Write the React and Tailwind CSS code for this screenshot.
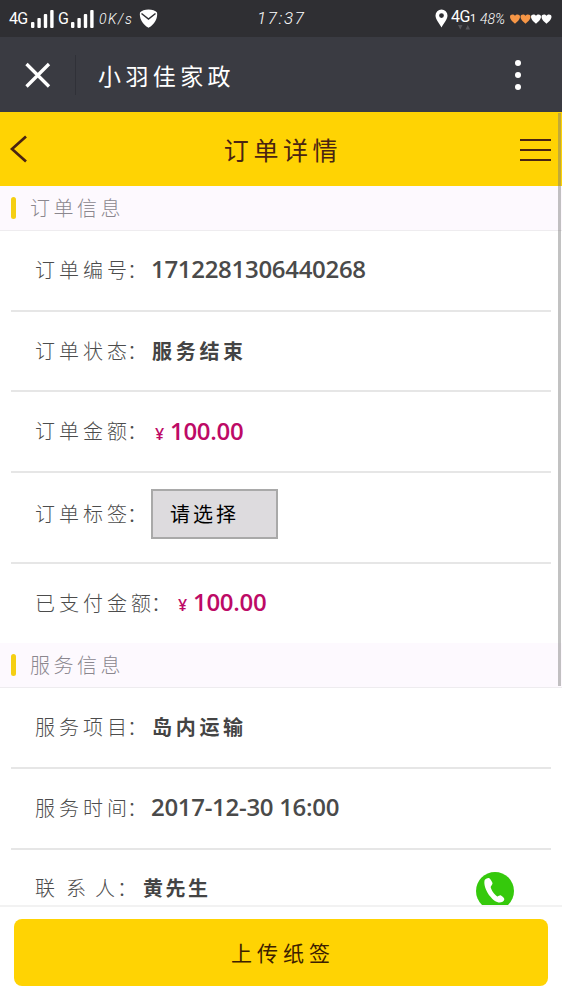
import clsx from "clsx";

const orderRows = [
  { label: "订单编号：", value: "1712281306440268", height: "h-[81px]" },
  { label: "订单状态：", text: "服务结束", height: "h-20" },
  { label: "订单金额：", price: "100.00", height: "h-[81px]" },
  { label: "订单标签：", select: "请选择", height: "h-[91px]" },
  { label: "已支付金额：", price: "100.00", height: "h-[79px]", wide: true, last: true },
];

const serviceRows = [
  { label: "服务项目：", text: "岛内运输", height: "h-[81px]" },
  { label: "服务时间：", value: "2017-12-30 16:00", height: "h-[81px]" },
];

const hearts = ["#f79646", "#f79646", "#ffffff", "#ffffff"];

function Signal() {
  return (
    <svg className="h-[18px] w-[23px]" viewBox="0 0 23 18" fill="#fff">
      <rect x="0" y="12" width="3.4" height="6" rx="1" />
      <rect x="6.4" y="8" width="3.4" height="10" rx="1" />
      <rect x="12.8" y="4" width="3.4" height="14" rx="1" />
      <rect x="19.2" y="0" width="3.4" height="18" rx="1" />
    </svg>
  );
}

function StatusBar() {
  return (
    <div className="flex h-[37px] items-center bg-[#2f2f33] pl-[9px] pr-[10px] text-white">
      <div className="flex w-[248px] items-center whitespace-nowrap font-['Roboto',sans-serif]">
        <span className="w-[22px] text-base leading-none tracking-[-0.8px]">4G</span>
        <Signal />
        <span className="ml-[4px] w-[13px] text-base leading-none">G</span>
        <Signal />
        <span className="ml-[5px] w-[35px] text-[14px] font-light italic leading-none tracking-[1.5px]">0K/s</span>
        <svg className="ml-[5px] h-[19px] w-[19px]" viewBox="0 0 19 19">
          <path d="M9.5 0.5C13 0.5 16.5 1.5 18 3.5C19 9 15.5 15.5 9.5 18.8C3.5 15.5 0 9 1 3.5C2.5 1.5 6 0.5 9.5 0.5Z" fill="#fff" />
          <path d="M2.5 4.5L9.5 10L16.5 4.5" fill="none" stroke="#2f2f33" strokeWidth="1.5" />
        </svg>
      </div>
      <span className="w-[49px] text-[17px] font-light italic leading-none tracking-[1.7px] font-['Roboto',sans-serif]">17:37</span>
      <div className="ml-auto flex items-center whitespace-nowrap font-['Roboto',sans-serif]">
        <svg className="mr-px h-[19px] w-[13px]" viewBox="0 0 13 19">
          <path fillRule="evenodd" d="M6.5 0.5A6 6 0 0 0 0.5 6.5C0.5 10.5 4.5 14.5 6.5 18.5C8.5 14.5 12.5 10.5 12.5 6.5A6 6 0 0 0 6.5 0.5ZM6.5 4.2A2.4 2.4 0 1 1 6.5 9A2.4 2.4 0 1 1 6.5 4.2Z" fill="#fff" />
        </svg>
        <div className="ml-[2px] flex w-[27px] flex-col">
          <span className="flex items-end text-base leading-[17px] tracking-[-0.5px]">
            4G<span className="text-[11px] leading-[12px]">1</span>
          </span>
          <svg className="ml-[7px] h-[5px] w-3" viewBox="0 0 12 5" fill="#55555a">
            <path d="M0 0H4.5L2.25 4.5ZM7.5 4.5H12L9.75 0Z" />
          </svg>
        </div>
        <span className="ml-[2px] w-[30px] text-[14px] font-light italic leading-none">48%</span>
        <svg className="h-[10px] w-[42px]" viewBox="0 0 42 10">
          {hearts.map((color, i) => (
            <path
              key={i}
              transform={`translate(${i * 10.5} 0)`}
              d="M5 9.8C3 8 0 5.8 0 2.8C0 0.3 3.5-0.3 5 1.8C6.5-0.3 10 0.3 10 2.8C10 5.8 7 8 5 9.8Z"
              fill={color}
            />
          ))}
        </svg>
      </div>
    </div>
  );
}

function AppBar() {
  return (
    <div className="flex h-[75px] items-center bg-[#3a3b42] text-white">
      <svg className="ml-[25px] h-[26px] w-[26px]" viewBox="0 0 26 26" stroke="#fff" strokeWidth="3.3">
        <path d="M1.5 2L24 24.5M24 2L1.5 24.5" />
      </svg>
      <div className="ml-6 h-10 w-px bg-[#303138]" />
      <h1 className="ml-[22px] mt-px text-[23px] font-normal tracking-[4.4px]">小羽佳家政</h1>
      <div className="ml-auto mr-[41px] flex flex-col gap-[6px]">
        <span className="size-[6px] rounded-full bg-white" />
        <span className="size-[6px] rounded-full bg-white" />
        <span className="size-[6px] rounded-full bg-white" />
      </div>
    </div>
  );
}

function PageHeader() {
  return (
    <div className="flex h-[74px] items-center justify-between bg-[#ffd303] pl-[10px] pr-[11px] text-[#4a2412]">
      <svg className="h-[28px] w-[31px]" viewBox="0 0 31 28" fill="none" stroke="currentColor" strokeWidth="2.7">
        <path d="M16 1.5L2 14L16 26.5" />
      </svg>
      <h2 className="pl-[5px] pt-[2px] text-[25px] font-normal tracking-[4.6px]">订单详情</h2>
      <div className="mt-[2px] flex w-[31px] flex-col gap-2">
        <span className="h-0.5 bg-current" />
        <span className="h-0.5 bg-current" />
        <span className="h-0.5 bg-current" />
      </div>
    </div>
  );
}

function SectionTitle({ children }) {
  return (
    <div className="flex h-[45px] items-center border-b border-[#eeecef] bg-[#fdf9fe] pl-[11px]">
      <span className="h-[22px] w-[5px] rounded-full bg-[#f5cf13]" />
      <h3 className="-mt-px ml-[14px] text-[20px] font-light leading-none tracking-[3.5px] text-[#8b878e]">{children}</h3>
    </div>
  );
}

function Row({ label, value, text, price, select, height, wide, last }) {
  return (
    <div className={clsx("mx-[11px] flex items-center whitespace-nowrap pl-6", height, !last && "border-b-2 border-[#e6e6e6]")}>
      <span className={clsx("flex shrink-0 text-[20px] font-light text-[#4c4c4c]", wide ? "w-[141px]" : "w-[116px]", select ? "-mt-[7px]" : "-mt-px")}>
        <span className="tracking-[4px]">{label.slice(0, -2)}</span>
        {/* the colon sits tight against the last character */}
        <span>{label.slice(-2)}</span>
      </span>
      {value && <span className="-mt-[3px] text-2xl font-semibold tracking-[-0.3px] text-[#4a4a4a] font-['Open_Sans',sans-serif]">{value}</span>}
      {text && <span className="-mt-px pl-px text-[20px] font-bold tracking-[3.7px] text-[#444]">{text}</span>}
      {price && (
        <span className={clsx("flex items-baseline text-[#bd0a66]", wide ? "-mt-[4px] pl-[2px]" : "-mt-px pl-[4px]")}>
          <span className="w-[15px] text-[16px] font-semibold font-['Open_Sans',sans-serif]">¥</span>
          <span className="text-2xl font-semibold tracking-[-0.3px] font-['Open_Sans',sans-serif]">{price}</span>
        </span>
      )}
      {select && (
        <button className="-mt-[7px] h-[50px] w-[127px] border-2 border-[#a9a9a9] bg-[#dddbde] pl-[17px] text-left text-[20px] tracking-[3px] text-black">
          {select}
        </button>
      )}
    </div>
  );
}

function ContactRow() {
  return (
    <div className="flex h-[55px] items-start overflow-hidden whitespace-nowrap pl-[35px] pr-[48px] pt-[22px]">
      <div className="flex w-[108px] items-center text-[20px] font-light leading-8 text-[#4c4c4c]">
        <span className="w-[31px]">联</span>
        <span className="w-[29px]">系</span>
        <span className="w-[22px]">人</span>
        <span>：</span>
      </div>
      <span className="text-[20px] font-bold leading-8 tracking-[2.5px] text-[#444]">黄先生</span>
      <svg className="ml-auto size-[38px] shrink-0" viewBox="0 0 38 38">
        <circle cx="19" cy="19" r="19" fill="#35c90c" />
        <path d="M8.5 8.5C9 7 11.5 5.8 12.8 6C14 6.4 15.5 8.5 16.5 11C17 12.5 14.5 14 14.7 15.2C15.2 18 18.5 22.5 21 24.2C22.3 25 23.5 22.8 25 23.5C27 24.5 28.5 26.5 28.3 27.5C28 29.5 25 31 22.5 30.5C16 29 7 17 8.5 8.5Z" fill="#fff" />
      </svg>
    </div>
  );
}

function App() {
  return (
    <div className="relative flex h-[1000px] w-[562px] flex-col overflow-hidden bg-white font-['Noto_Sans_CJK_SC',sans-serif]">
      <StatusBar />
      <AppBar />
      <PageHeader />
      <SectionTitle>订单信息</SectionTitle>
      {orderRows.map((row) => (
        <Row key={row.label} {...row} />
      ))}
      <SectionTitle>服务信息</SectionTitle>
      {serviceRows.map((row) => (
        <Row key={row.label} {...row} />
      ))}
      <ContactRow />
      <div className="h-[95px] border-t-2 border-[#f2f2f2] bg-white px-[14px] pt-3">
        <button className="h-[67px] w-full rounded-lg bg-[#ffd303] pl-1 text-[21px] font-normal tracking-[5px] text-[#3c2000]">上传纸签</button>
      </div>
      {/* scroll thumb over the page content */}
      <div className="absolute right-px top-[113px] h-[573px] w-[3px] bg-[#777]/45" />
    </div>
  );
}

export default App;
